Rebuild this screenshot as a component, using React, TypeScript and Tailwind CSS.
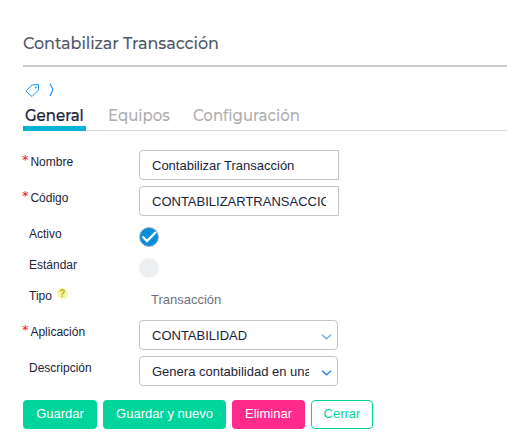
import type { ReactNode } from "react";

const sans = "font-['Liberation_Sans',Arial,sans-serif]";
const heading = "font-['Montserrat','Inter',sans-serif]";

function Row({ label, required, help, tall = true, children }: {
  label: string;
  required?: boolean;
  help?: boolean;
  tall?: boolean;
  children: ReactNode;
}) {
  return (
    <div className={`flex items-start ${tall ? "h-9" : "h-[31px]"}`}>
      <div className="flex h-6 w-[117px] shrink-0 items-center text-[12px] text-[#1b243b]">
        {required ? (
          <span className="mb-[4px] w-[8.400px] font-['DejaVu_Sans',sans-serif] text-[13px] leading-6 text-[#ff0033]">*</span>
        ) : (
          <span className="w-[7px]" />
        )}
        <span className="leading-6">{label}</span>
        {help && (
          <span className="mb-[5px] ml-[5px] flex size-[11px] items-center justify-center rounded-full bg-[#fbf7a0] text-[10px] leading-none font-bold text-[#b5ae35]">?</span>
        )}
      </div>
      {children}
    </div>
  );
}

function TextBox({ value }: { value: string }) {
  return (
    <div className="h-[30px] w-[200px] rounded-l border border-[#c3c3c3] px-3 text-[13px] leading-[29px] text-[#1b243b]">
      <div className="overflow-hidden whitespace-nowrap">{value}</div>
    </div>
  );
}

function Select({ value, color }: { value: string; color: string }) {
  return (
    <div className="flex h-[30px] w-[199px] items-start rounded border border-[#c3c3c3] pr-[5px] pl-3 text-[13px] leading-[29px] text-[#1b243b]">
      <div className="h-[28px] w-[157px] shrink-0 overflow-hidden whitespace-nowrap">{value}</div>
      <svg className="mt-[13px] ml-3 h-[6px] w-[11px] shrink-0" viewBox="0 0 11 6" fill="none" stroke={color} strokeWidth="1.5">
        <path d="M1 .8 5.500 4.800 10 .8" />
      </svg>
    </div>
  );
}

export default function App() {
  return (
    <div className={`h-[439px] w-[507px] overflow-hidden bg-white pl-[23px] ${sans}`}>
      <h1 className={`h-[67px] border-b-2 border-[#cacace] pt-[32px] text-[16px] leading-6 font-medium tracking-[-0.08px] whitespace-nowrap text-[#515766] ${heading}`}>
        <span className="inline-block scale-y-[1.06]">Contabilizar Transacción</span>
      </h1>
      <div className="flex h-[36px] items-start pt-[15px]">
        <svg className="ml-[2px] h-4 w-4" viewBox="0 0 16 16" fill="none" stroke="#2196f3" strokeWidth="1">
          <path d="M.8 9 7 3l6.500-.5v5.500L7 14.500Z" strokeLinejoin="round" />
          <circle cx="10.800" cy="5.500" r=".6" />
        </svg>
        <svg className="ml-[8px] h-4 w-[6px]" viewBox="0 0 6 16" fill="none" stroke="#2196f3" strokeWidth="1.2">
          <path d="M1 1.500 4 7.500 1 14" />
        </svg>
      </div>
      <nav className={`flex h-7 gap-[22px] border-b border-[#d9d9d9] text-[15px] leading-[25px] font-medium whitespace-nowrap text-[#aeaeae] ${heading}`}>
        <div className="h-7 w-[63px] border-b-[5px] border-[#00b2d6] pl-[2px] text-[#1b243b] [-webkit-text-stroke:0.2px_#1b243b]">
          <span className="inline-block scale-y-[1.06]">General</span>
        </div>
        <div className="w-[63px]"><span className="inline-block scale-y-[1.06]">Equipos</span></div>
        <div><span className="inline-block scale-y-[1.06]">Configuración</span></div>
      </nav>
      <div className="mt-[19px] -ml-px">
        <Row label="Nombre" required><TextBox value="Contabilizar Transacción" /></Row>
        <Row label="Código" required><TextBox value="CONTABILIZARTRANSACCION" /></Row>
        <Row label="Activo" tall={false}>
          <div className="mt-[5px] flex size-5 items-center justify-center rounded-full border border-[#aeb8c0] bg-[#058edb]">
            <svg className="h-[14px] w-4 shrink-0" viewBox="0 0 16 14" fill="none" stroke="white" strokeWidth="2.4">
              <path d="m1.500 6.500 4.500 4.500L15 2" />
            </svg>
          </div>
        </Row>
        <Row label="Estándar" tall={false}>
          <div className="mt-[5px] size-5 rounded-full bg-[#eeeff1]" />
        </Row>
        <Row label="Tipo" help>
          <div className="pt-1 pl-3 text-[13px] leading-6 text-[#6d717b]">Transacción</div>
        </Row>
        <Row label="Aplicación" required><Select value="CONTABILIDAD" color="#72aee6" /></Row>
        <Row label="Descripción"><Select value="Genera contabilidad en una transacción" color="#3386d6" /></Row>
      </div>
      <div className="mt-2 flex gap-[6px] text-center text-[13px] leading-[26px] text-white">
        <button className="h-[29px] w-[74px] rounded bg-[#00d69b] pb-px">Guardar</button>
        <button className="h-[29px] w-[123px] rounded bg-[#00d69b] pb-px">Guardar y nuevo</button>
        <button className="h-[29px] w-[73px] rounded bg-[#ff2a8c] pb-px">Eliminar</button>
        <button className="h-[29px] w-[62px] rounded border border-[#00d69b] pb-px leading-6 text-[#00d69b]">Cerrar</button>
      </div>
    </div>
  );
}
